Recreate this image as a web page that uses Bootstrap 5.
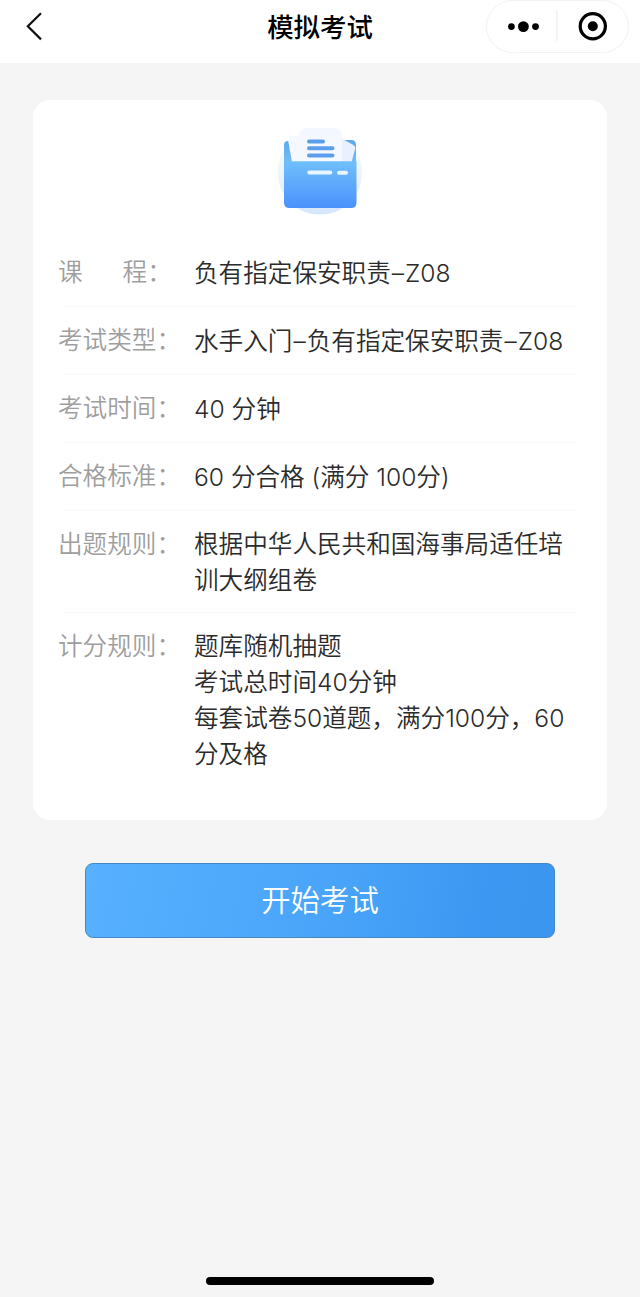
<!DOCTYPE html>
<html lang="zh-CN">
<head>
<meta charset="utf-8">
<meta name="viewport" content="width=device-width, initial-scale=1">
<title>模拟考试</title>
<link href="https://cdn.jsdelivr.net/npm/bootstrap@5.3.0/dist/css/bootstrap.min.css" rel="stylesheet">
<style>
  body { background: #f5f5f5; font-family: Inter, "Noto Sans CJK SC", sans-serif; font-weight: 350; color: #2b2b2b; }
  .top-bar { height: 63px; padding: 0 11px 10px; background: #fff; }
  .top-side { width: 143px; padding-left: 13px; }
  .top-title { font-size: 26.4px; line-height: 55px; font-weight: 500; color: #000; }
  .capsule { width: 143px; height: 53px; border: 1px solid #f2f2f2; flex: none; }
  .exam-card { margin: 37px 33px 0; height: 720px; border-radius: 17px; padding-top: 20px; }
  .exam-icon { height: 119px; }
  .info-row { min-height: 67px; padding: 15px 26px 14px 25px; font-size: 24.6px; line-height: 36px; }
  .info-label { width: 136px; flex: none; color: #9e9e9e; }
  .info-value { width: 380px; flex: none; }
  .info-row.single .info-value { padding-top: 1px; }
  .rule { height: 1px; margin: 0 31px 0 30px; background: #f8f8f8; }
  .word-gap { margin-right: 40px; }
  .dash { margin: 0 1px; }
  .start-area { padding-top: 43px; }
  .start-btn, .start-btn:hover { width: 470px; height: 75px; border: 1px solid #4488c6; border-radius: 8px; font-size: 29.4px; font-weight: 350; line-height: 73px; padding: 0; color: #fff; background: linear-gradient(100deg, #57b1ff, #4aa5fa 50%, #3b97f1 85%, #3c96ef); }
  .home-bar { width: 228px; height: 8px; background: #000; margin-bottom: 12px; }
</style>
</head>
<body>
<div class="d-flex flex-column vh-100 overflow-hidden">
  <header class="top-bar d-flex align-items-start justify-content-between">
    <div class="top-side">
      <svg class="d-block" width="22" height="53" viewBox="0 0 22 53" fill="none" stroke="#111" stroke-width="2.2"><path d="M17 13.2 3.8 26.3 17 39.4"/></svg>
    </div>
    <div class="top-title">模拟考试</div>
    <div class="capsule rounded-pill">
      <svg class="d-block" width="141" height="51" viewBox="487 1 141 51">
        <g fill="#000"><circle cx="511.4" cy="26.6" r="3.4"/><circle cx="523.4" cy="26.6" r="5.4"/><circle cx="535.5" cy="26.6" r="3.4"/><circle cx="592.8" cy="26.3" r="5"/></g>
        <path d="M557 10v31" stroke="#e8e8e8"/>
        <circle cx="592.8" cy="26.3" r="12.6" fill="none" stroke="#000" stroke-width="3.2"/>
      </svg>
    </div>
  </header>

  <main>
    <section class="exam-card card border-0">
      <div class="exam-icon d-flex justify-content-center">
        <svg width="110" height="115" viewBox="265 120 110 115">
          <defs>
            <linearGradient id="front" x1="0" y1="0" x2="0" y2="1"><stop offset="0" stop-color="#70c0fb"/><stop offset="1" stop-color="#4b91fb"/></linearGradient>
            <linearGradient id="back" x1="0" y1="0" x2="0" y2="1"><stop offset="0" stop-color="#5ea9ee"/><stop offset="1" stop-color="#75c0f3"/></linearGradient>
            <linearGradient id="halo" x1="0" y1="0" x2="0" y2="1"><stop offset="0" stop-color="#eef4fe" stop-opacity=".2"/><stop offset="1" stop-color="#d5e6fd"/></linearGradient>
            <linearGradient id="sheet" x1="0" y1="0" x2="0" y2="1"><stop offset="0" stop-color="#f3f7ff"/><stop offset="1" stop-color="#f6f9ff"/></linearGradient>
          </defs>
          <circle cx="320" cy="172.3" r="42.3" fill="url(#halo)"/>
          <path d="M284 165v-20q0-4 4-4h8l20-1h35q5 0 5 5v20Z" fill="url(#back)"/>
          <path d="M288.3 141.5 290 136h12v26h-10Z" fill="#f5f8ff"/>
          <path d="M340 135.5 342.5 139 352.5 144.5q3.5 2 2.500 5L351.500 162H339Z" fill="#e9f1fe"/>
          <path d="M299 162v-25q0-9 9-9h25q9 0 9 9v25Z" fill="url(#sheet)"/>
          <path d="M309 141.5h14M309 148.2h23.5M309 155.5h23.5" stroke="#5b9fec" stroke-width="4" stroke-linecap="round"/>
          <path d="M284 161.2h72.5v41.3q0 5.5-5.5 5.5h-61.5q-5.5 0-5.5-5.5Z" fill="url(#front)"/>
          <path d="M309.3 172.6h21M339 172.8h7" stroke="#e8f7ff" stroke-width="4" stroke-linecap="round"/>
        </svg>
      </div>

      <div class="info-row single d-flex"><div class="info-label"><span class="word-gap">课</span>程：</div><div class="info-value">负有指定保安职责<span class="dash">–</span>Z08</div></div>
      <div class="rule"></div>
      <div class="info-row single d-flex"><div class="info-label">考试类型：</div><div class="info-value text-nowrap">水手入门<span class="dash">–</span>负有指定保安职责<span class="dash">–</span>Z08</div></div>
      <div class="rule"></div>
      <div class="info-row single d-flex"><div class="info-label">考试时间：</div><div class="info-value">40 分钟</div></div>
      <div class="rule"></div>
      <div class="info-row single d-flex"><div class="info-label">合格标准：</div><div class="info-value">60 分合格 (满分 100分)</div></div>
      <div class="rule"></div>
      <div class="info-row d-flex"><div class="info-label">出题规则：</div><div class="info-value">根据中华人民共和国海事局适任培<br>训大纲组卷</div></div>
      <div class="rule"></div>
      <div class="info-row d-flex"><div class="info-label">计分规则：</div><div class="info-value">题库随机抽题<br>考试总时间40分钟<br>每套试卷50道题，满分100分，60<br>分及格</div></div>
    </section>
    <div class="start-area d-flex justify-content-center">
      <button type="button" class="btn start-btn">开始考试</button>
    </div>
  </main>
  <div class="home-bar rounded-pill mx-auto mt-auto"></div>
</div>
<script src="https://cdn.jsdelivr.net/npm/bootstrap@5.3.0/dist/js/bootstrap.bundle.min.js"></script>
</body>
</html>
